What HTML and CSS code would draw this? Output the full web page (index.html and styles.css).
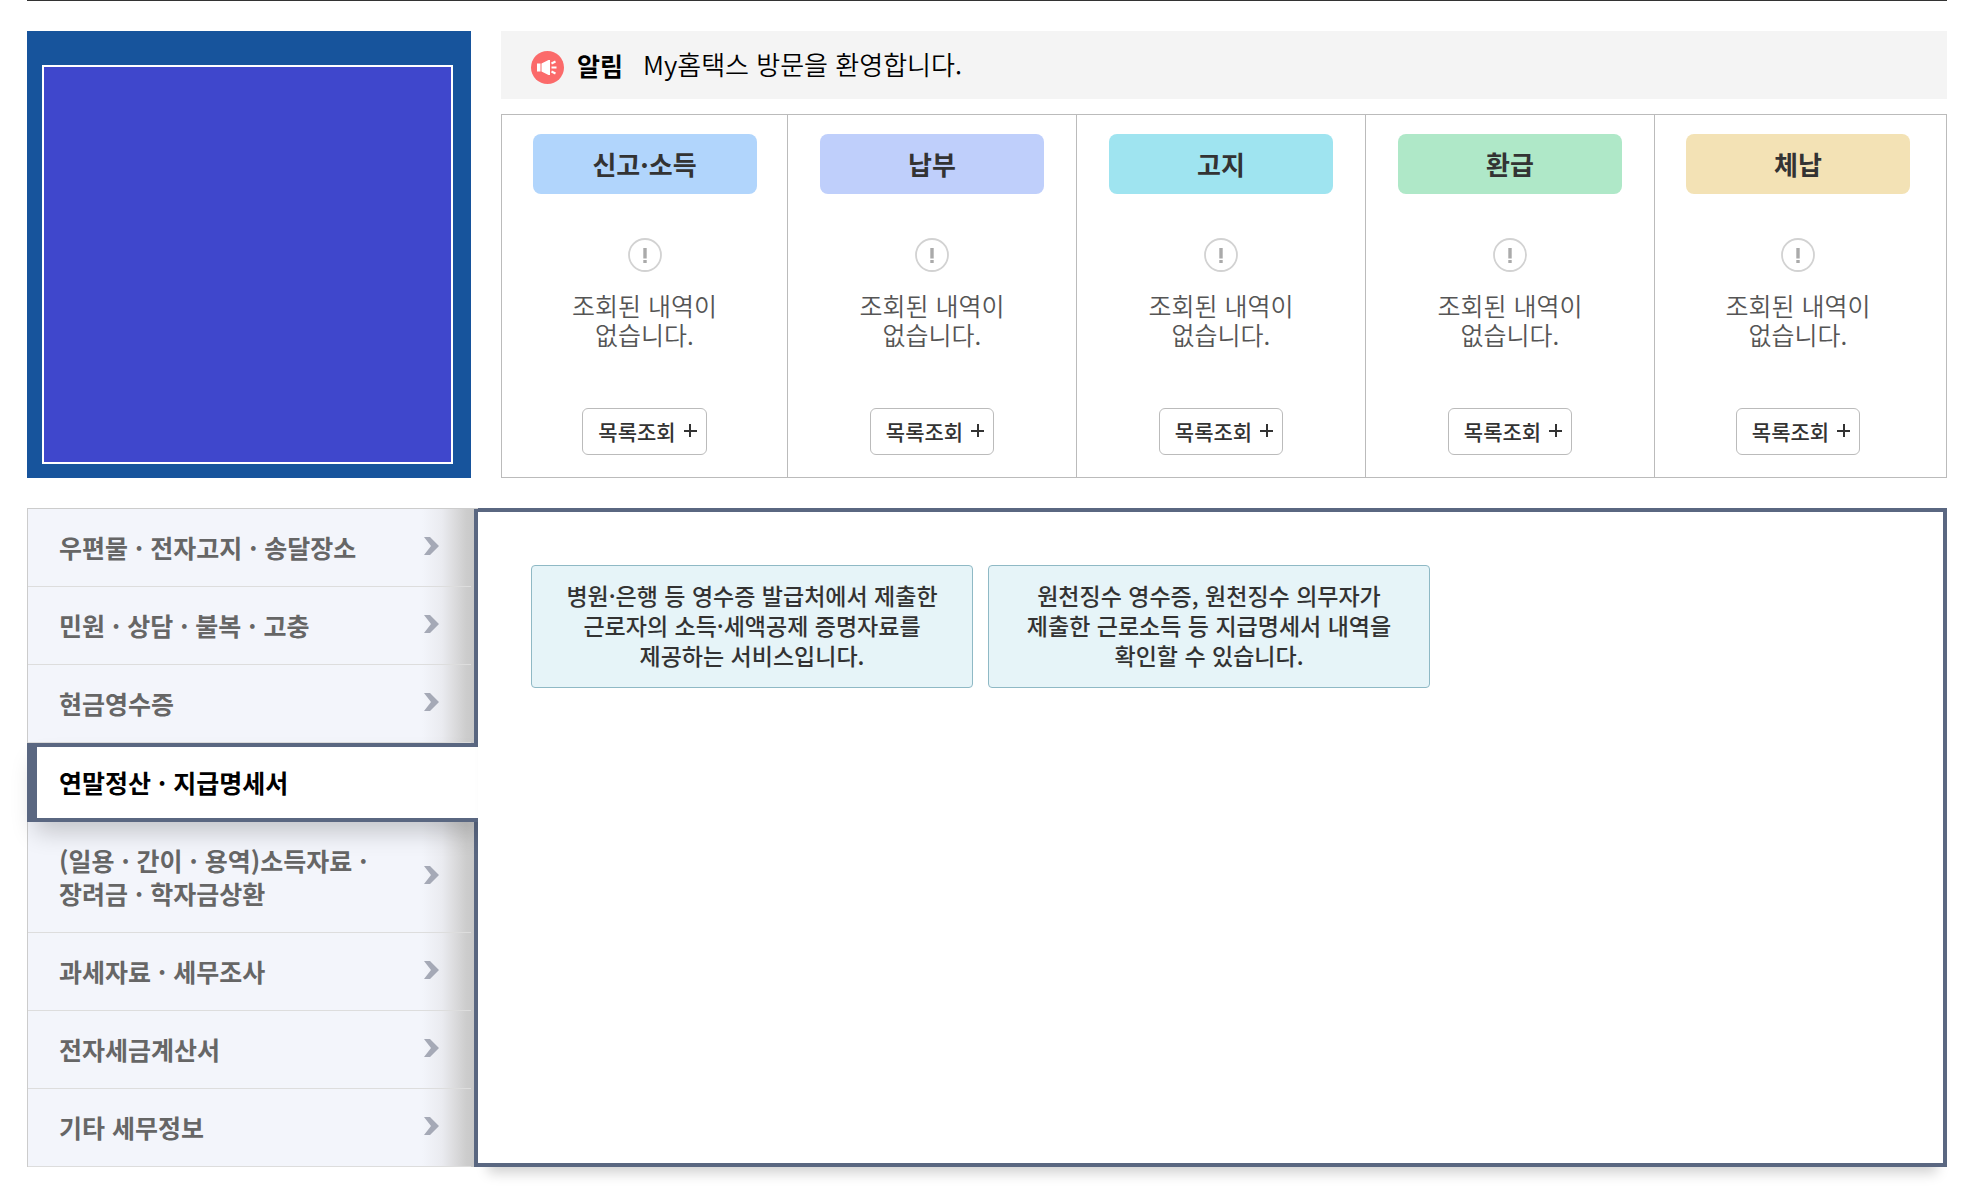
FILE: index.html
```html
<!DOCTYPE html>
<html lang="ko">
<head>
<meta charset="utf-8">
<title>My홈택스</title>
<link rel="stylesheet" href="styles.css">
</head>
<body>
<svg class="sprite" aria-hidden="true">
  <symbol id="icon-empty" viewBox="0 0 34 34">
    <circle cx="17" cy="17" r="16" fill="#fff" stroke="#d2d2d2" stroke-width="1.800"/>
    <path d="M15.300 10h3.400v10.500h-3.400zM15.300 22h3.400v3h-3.400z" fill="#aaa"/>
  </symbol>
  <symbol id="icon-arrow" viewBox="0 0 15 18">
    <path d="M0 0h6l9 9-9 9H0l7-9z" fill="#a5a9b6"/>
  </symbol>
</svg>
<main class="page">
  <section class="summary">
    <div class="profile"><div class="profile-box"></div></div>
    <div class="overview">
      <div class="notice">
        <svg class="notice-icon" viewBox="0 0 33 33" aria-hidden="true">
          <circle cx="16.500" cy="16.500" r="16.500" fill="#fb6a6a"/>
          <path d="M6 12.500h3.500v8H6zM10.500 12.500l7-3.500h1.500v15h-1.500l-7-3.500z" fill="#fff"/>
          <path d="M20.500 12.500l4-2M20.500 16.500H25.500M20.500 20.500l4 2" stroke="#fff" stroke-width="2" fill="none"/>
        </svg>
        <strong class="notice-title">알림</strong>
        <p class="notice-text">My홈택스 방문을 환영합니다.</p>
      </div>
      <div class="cards">
        <article class="card">
          <h2 class="card-title blue">신고·소득</h2>
          <svg class="card-icon" aria-hidden="true"><use href="#icon-empty"/></svg>
          <p class="card-text">조회된 내역이<br>없습니다.</p>
          <button class="card-button" type="button">목록조회 <span class="plus"></span></button>
        </article>
        <article class="card">
          <h2 class="card-title violet">납부</h2>
          <svg class="card-icon" aria-hidden="true"><use href="#icon-empty"/></svg>
          <p class="card-text">조회된 내역이<br>없습니다.</p>
          <button class="card-button" type="button">목록조회 <span class="plus"></span></button>
        </article>
        <article class="card">
          <h2 class="card-title cyan">고지</h2>
          <svg class="card-icon" aria-hidden="true"><use href="#icon-empty"/></svg>
          <p class="card-text">조회된 내역이<br>없습니다.</p>
          <button class="card-button" type="button">목록조회 <span class="plus"></span></button>
        </article>
        <article class="card">
          <h2 class="card-title green">환급</h2>
          <svg class="card-icon" aria-hidden="true"><use href="#icon-empty"/></svg>
          <p class="card-text">조회된 내역이<br>없습니다.</p>
          <button class="card-button" type="button">목록조회 <span class="plus"></span></button>
        </article>
        <article class="card">
          <h2 class="card-title sand">체납</h2>
          <svg class="card-icon" aria-hidden="true"><use href="#icon-empty"/></svg>
          <p class="card-text">조회된 내역이<br>없습니다.</p>
          <button class="card-button" type="button">목록조회 <span class="plus"></span></button>
        </article>
      </div>
    </div>
  </section>

  <section class="detail">
    <nav class="menu">
      <ul class="menu-list">
        <li class="menu-item"><a class="menu-link" href="#mail">우편물 · 전자고지 · 송달장소<svg class="menu-arrow" aria-hidden="true"><use href="#icon-arrow"/></svg></a></li>
        <li class="menu-item"><a class="menu-link" href="#civil">민원 · 상담 · 불복 · 고충<svg class="menu-arrow" aria-hidden="true"><use href="#icon-arrow"/></svg></a></li>
        <li class="menu-item"><a class="menu-link" href="#cash">현금영수증<svg class="menu-arrow" aria-hidden="true"><use href="#icon-arrow"/></svg></a></li>
        <li class="menu-item active"><a class="menu-link" href="#yearend" aria-current="page">연말정산 · 지급명세서</a></li>
        <li class="menu-item"><a class="menu-link" href="#income">(일용 · 간이 · 용역)소득자료 ·<br>장려금 · 학자금상환<svg class="menu-arrow" aria-hidden="true"><use href="#icon-arrow"/></svg></a></li>
        <li class="menu-item"><a class="menu-link" href="#audit">과세자료 · 세무조사<svg class="menu-arrow" aria-hidden="true"><use href="#icon-arrow"/></svg></a></li>
        <li class="menu-item"><a class="menu-link" href="#invoice">전자세금계산서<svg class="menu-arrow" aria-hidden="true"><use href="#icon-arrow"/></svg></a></li>
        <li class="menu-item"><a class="menu-link" href="#etc">기타 세무정보<svg class="menu-arrow" aria-hidden="true"><use href="#icon-arrow"/></svg></a></li>
      </ul>
    </nav>
    <div class="panel">
      <a class="service" href="#deduction">병원·은행 등 영수증 발급처에서 제출한<br>근로자의 소득·세액공제 증명자료를<br>제공하는 서비스입니다.</a>
      <a class="service" href="#statement">원천징수 영수증, 원천징수 의무자가<br>제출한 근로소득 등 지급명세서 내역을<br>확인할 수 있습니다.</a>
    </div>
  </section>
</main>
</body>
</html>
```
FILE: styles.css
```css
* {
  box-sizing: border-box;
}

body {
  margin: 0;
  background: #fff;
  color: #333;
  font-family: "Noto Sans CJK KR", "Noto Sans", sans-serif;
}

h2,
p,
ul {
  margin: 0;
  padding: 0;
}

a {
  color: inherit;
  text-decoration: none;
}

.sprite {
  position: absolute;
  width: 0;
  height: 0;
}

.page {
  margin: 0 36px 0 27px;
  padding-bottom: 30px;
  border-top: 1px solid #333;
}

/* Top summary */
.summary {
  display: flex;
  gap: 30px;
  margin-top: 30px;
}

.profile {
  display: flex;
  flex: 0 0 444px;
  padding: 34px 18px 14px 15px;
  background: #17549c;
}

.profile-box {
  flex: 1;
  border: 2px solid #fff;
  background: #3f47cc;
}

.overview {
  display: flex;
  flex: 1;
  flex-direction: column;
  gap: 15px;
  min-width: 0;
}

.notice {
  display: flex;
  align-items: center;
  height: 68px;
  padding: 0 30px;
  background: #f4f4f4;
  color: #000;
}

.notice-icon {
  width: 33px;
  height: 33px;
  margin-top: 4px;
}

.notice-title {
  margin: 0 20px 0 13px;
  font-size: 25px;
  font-weight: 700;
}

.notice-text {
  padding-bottom: 4px;
  font-size: 26px;
  font-weight: 350;
}

.cards {
  display: grid;
  grid-template-columns: 286fr 289fr 289fr 289fr 291fr;
  border: 1px solid #bbb;
}

.card {
  display: flex;
  flex-direction: column;
  align-items: center;
  padding: 19px 30px 22px;
  border-right: 1px solid #bbb;
}

.card:last-child {
  padding-right: 35px;
  border-right: 0;
}

.card-title {
  width: 100%;
  max-width: 224px;
  border-radius: 8px;
  font-size: 26px;
  font-weight: 700;
  line-height: 60px;
  text-align: center;
}

.blue { background: #b1d5fc; }
.violet { background: #bfcffb; }
.cyan { background: #9fe4f0; }
.green { background: #afe8c8; }
.sand { background: #f3e2b5; }

.card-icon {
  width: 34px;
  height: 34px;
  margin: 44px 0 19px;
}

.card-text {
  color: #555;
  font-size: 25px;
  font-weight: 350;
  line-height: 29px;
  text-align: center;
}

.card-button {
  display: flex;
  align-items: center;
  gap: 8px;
  height: 47px;
  margin-top: 59px;
  padding: 0 9px 2px 15px;
  border: 1px solid #bbb;
  border-radius: 6px;
  background: #fff;
  color: #333;
  font: 500 21px "Noto Sans CJK KR", sans-serif;
}

.plus {
  width: 13px;
  height: 13px;
  background:
    linear-gradient(#333, #333) center / 13px 2px no-repeat,
    linear-gradient(#333, #333) center / 2px 13px no-repeat;
}

/* Detail area */
.detail {
  display: flex;
  margin-top: 30px;
}

.menu {
  flex: 0 0 451px;
}

.menu-list {
  border-top: 1px solid #ccc;
  background: linear-gradient(to left, #5a6781 4px, #c8c8c8 4px, #cdcdcd 12px, #dcdcde 24px, #eaebf0 36px, #f3f5fb 56px);
  list-style: none;
}

.menu-item {
  border-left: 1px solid #ccc;
}

.menu-link {
  display: flex;
  align-items: center;
  justify-content: space-between;
  min-height: 78px;
  margin-right: 7px;
  padding: 22px 32px 22px 31px;
  border-bottom: 1px solid #ddd;
  color: #666;
  font-size: 25px;
  font-weight: 700;
  line-height: 33px;
}

.menu-item:first-child .menu-link {
  min-height: 77px;
}

.menu-arrow {
  width: 15px;
  height: 18px;
  margin-bottom: 4px;
}

.active {
  position: relative;
  border: solid #5a6781;
  border-width: 4px 0 4px 10px;
  background: #fff;
  box-shadow: 4px 14px 24px -4px rgba(0, 0, 0, 0.2);
}

.active .menu-link {
  min-height: 71px;
  padding: 16px 22px;
  border: 0;
  color: #000;
}

.panel {
  display: flex;
  position: relative;
  flex: 1;
  align-items: flex-start;
  gap: 15px;
  min-width: 0;
  padding: 53px;
  border: 4px solid #5a6781;
  border-left: 0;
  background: #fff;
  box-shadow: 0 16px 12px -10px rgba(0, 0, 0, 0.18);
}

.service {
  flex: 0 1 442px;
  padding: 14px 10px 17px;
  border: 1px solid #8fb9c5;
  border-radius: 4px;
  background: #e6f4f8;
  font-size: 23px;
  font-weight: 500;
  line-height: 30px;
  text-align: center;
}
```
